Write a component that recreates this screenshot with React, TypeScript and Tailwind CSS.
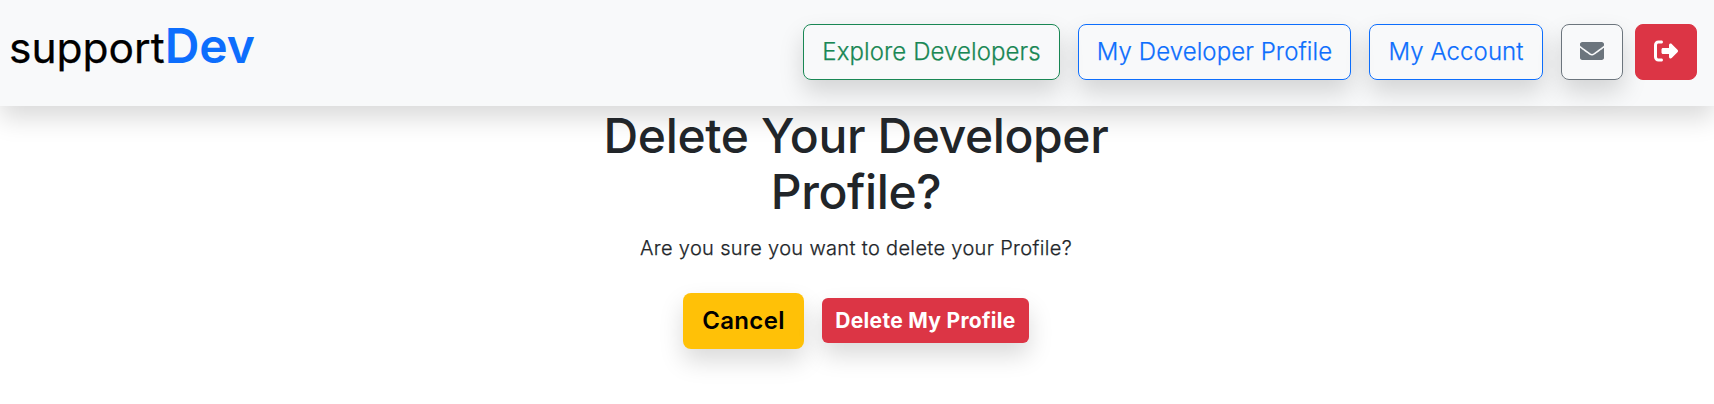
import { FaEnvelope } from "react-icons/fa";
import { FaRightFromBracket } from "react-icons/fa6";

const btn =
  "flex h-[56px] items-center justify-center rounded-lg border text-2xl font-light tracking-[0.08px] [-webkit-text-stroke:0.25px]";
const lift = "shadow-[0_12px_24px_rgba(0,0,0,0.15)]";

export default function App() {
  return (
    <div className="min-h-[404px] bg-white font-['Inter',sans-serif] text-[#212529] [font-optical-sizing:none]">
      <nav className="flex h-[106px] items-start justify-between bg-[#f8f9fa] pl-[9px] pr-[17px] shadow-[0_12px_24px_rgba(0,0,0,0.15)]">
        <a className="mt-[10px] flex items-baseline text-[42.5px] font-normal text-black [-webkit-text-stroke:0.25px]">
          support<strong className="text-[48px] font-semibold text-[#0d6efd] [-webkit-text-stroke:0px]">Dev</strong>
        </a>
        <div className="mt-[24px] flex">
          <button className={`${btn} ${lift} w-[257px] border-[#198754] text-[#198754]`}>Explore Developers</button>
          <button className={`${btn} ${lift} ml-[18px] w-[273px] border-[#0d6efd] text-[#0d6efd]`}>My Developer Profile</button>
          <button className={`${btn} ${lift} ml-[18px] w-[174px] border-[#0d6efd] text-[#0d6efd]`}>My Account</button>
          <button className={`${btn} ${lift} ml-[18px] w-[62px] border-[#6c757d] pb-[2px] text-[#6c757d]`}><FaEnvelope /></button>
          <button className={`${btn} ml-[12px] w-[62px] border-[#dc3545] bg-[#dc3545] pb-[2px] text-white`}><FaRightFromBracket /></button>
        </div>
      </nav>
      <main className="mx-auto flex w-[570px] flex-col items-center pr-[2px] text-center">
        <h1 className="mt-[2px] text-[48px] leading-[56px] font-medium tracking-[-0.38px]">Delete Your Developer Profile?</h1>
        <p className="mt-[13px] text-[20px] leading-[30px] font-light tracking-[0.34px] [-webkit-text-stroke:0.25px]">Are you sure you want to delete your Profile?</p>
        <div className="mt-[30px] flex items-start gap-[18px]">
          <button className={`h-[56px] w-[121px] rounded-lg bg-[#ffc107] text-2xl font-semibold tracking-[0.35px] text-black ${lift}`}>Cancel</button>
          <button className={`mt-[5px] h-[45px] w-[207px] rounded-md bg-[#dc3545] text-[21px] font-bold tracking-[0.3px] text-white ${lift}`}>Delete My Profile</button>
        </div>
      </main>
    </div>
  );
}
